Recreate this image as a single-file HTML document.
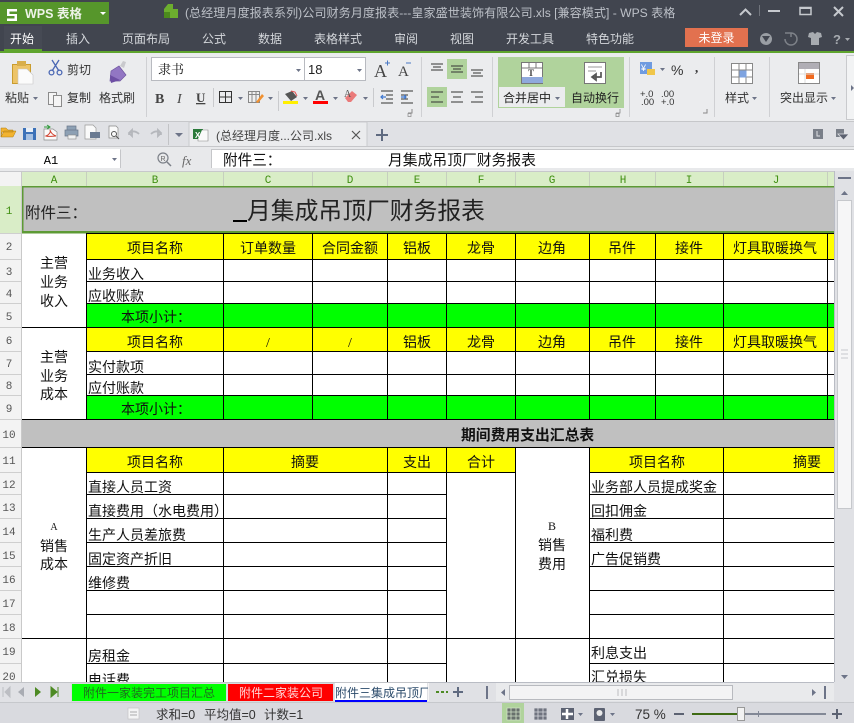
<!DOCTYPE html>
<html><head><meta charset="utf-8">
<style>
html,body{margin:0;padding:0;background:#ebecee;overflow:hidden}
svg{display:block}
text{white-space:pre}
.u{font-family:"Liberation Sans","Noto Sans CJK SC",sans-serif;font-size:12px;fill:#333}
.c{font-family:"Liberation Serif","WenQuanYi Zen Hei","Noto Sans CJK SC",sans-serif;font-size:14px;fill:#111}
.m{text-anchor:middle}
.tab{font-family:"Liberation Sans","Noto Sans CJK SC",sans-serif;font-size:12px;fill:#d4d7db}
.ch{font-family:"Liberation Mono",monospace;font-size:11px;fill:#3f8f10;text-anchor:middle}
.rh{font-family:"Liberation Mono",monospace;font-size:11px;fill:#555;text-anchor:middle}
.ar{fill:#6d7488}
</style></head><body>
<svg width="854" height="723" viewBox="0 0 854 723" xmlns="http://www.w3.org/2000/svg">
<defs><clipPath id="g"><rect x="0" y="171" width="834" height="511"/></clipPath></defs>

<!-- title bar -->
<rect width="854" height="51" fill="#41454f"/>
<rect y="51" width="854" height="2" fill="#5fa52e"/>
<rect x="0" y="2" width="109" height="22" fill="#56962b"/>
<path d="M7 9h10v2.500h-7.500v2.500h7.500v7h-10v-2.500h7.500v-2.500h-7.500z" fill="#fff"/>
<text x="25" y="18" style="font:bold 12.500px 'Liberation Sans','Noto Sans CJK SC',sans-serif;fill:#eef3e8">WPS 表格</text>
<path d="M100 12h6l-3 3z" fill="#fff"/>
<path d="M164 9l4-5h5v5h5v9h-5v0h-9z" fill="#6cae2e"/><rect x="164" y="12" width="6" height="6" fill="#4c8a1c"/>
<text x="185" y="17" style="font:12.130px 'Liberation Sans','Noto Sans CJK SC',sans-serif;fill:#bcc0c7">(总经理月度报表系列)公司财务月度报表---皇家盛世装饰有限公司.xls [兼容模式] - WPS 表格</text>
<path d="M740 15l5.500-5.500 5.500 5.500" fill="none" stroke="#c6c9ce" stroke-width="2"/>
<rect x="759" y="5" width="1" height="11" fill="#70747c"/>
<rect x="768" y="10" width="12" height="2" fill="#c6c9ce"/>
<rect x="800" y="7.500" width="11" height="7" fill="none" stroke="#c6c9ce" stroke-width="1.500"/><rect x="800" y="7" width="11" height="2" fill="#c6c9ce"/>
<path d="M834 7l9 9M843 7l-9 9" stroke="#c6c9ce" stroke-width="2"/>

<!-- tabs -->
<rect x="4" y="26" width="38" height="25" fill="#464a54"/>
<rect x="4" y="49" width="38" height="2" fill="#5fa52e"/>
<text class="tab" x="10" y="43" style="fill:#fff">开始</text>
<text class="tab" x="66" y="43">插入</text>
<text class="tab" x="122" y="43">页面布局</text>
<text class="tab" x="202" y="43">公式</text>
<text class="tab" x="258" y="43">数据</text>
<text class="tab" x="314" y="43">表格样式</text>
<text class="tab" x="394" y="43">审阅</text>
<text class="tab" x="450" y="43">视图</text>
<text class="tab" x="506" y="43">开发工具</text>
<text class="tab" x="586" y="43">特色功能</text>
<rect x="685" y="28" width="63" height="19" fill="#e2714f"/>
<text class="tab m" x="716.500" y="42" style="fill:#fff">未登录</text>
<circle cx="766" cy="39" r="6" fill="#9a9ea4"/><path d="M762 36h8l-4 6z" fill="#41454f"/>
<path d="M791 33a6 6 0 1 1-6 6M785 33h6v4" fill="none" stroke="#7d8188" stroke-width="1.500"/>
<path d="M809 33l4-1 2 2 2-2 4 1 1 4-3 1v7h-8v-7l-3-1z" fill="#a7abb0"/>
<text x="833" y="44" style="font:bold 13px 'Liberation Sans',sans-serif;fill:#a7abb0">?</text>
<path d="M845 38h5l-2.500 3z" fill="#a7abb0"/>

<!-- ribbon -->
<rect y="53" width="854" height="68" fill="#ebecee"/>
<rect y="121" width="854" height="1" fill="#c6c7ca"/>
<!-- clipboard -->
<rect x="12.500" y="64.500" width="18" height="19" fill="#edc468" stroke="#c99c2e"/>
<rect x="17" y="61" width="9" height="5" fill="#d8ae4c"/>
<path d="M18 69h9l6 6v9h-15z" fill="#fbfbfb" stroke="#c5c5c5" stroke-width=".6"/>
<text class="u" x="5" y="102">粘贴</text><path d="M33 97h5l-2.500 3z" class="ar"/>
<g fill="none" stroke="#4a67b4" stroke-width="1.300"><path d="M52 60l7 11M59 60l-7 11"/><circle cx="51.500" cy="72.500" r="2.400"/><circle cx="59.500" cy="72.500" r="2.400"/></g>
<text class="u" x="67" y="74">剪切</text>
<rect x="48.500" y="92.500" width="8" height="12" fill="#f5f5f5" stroke="#8b8b8b"/><rect x="53.500" y="95.500" width="8" height="11" fill="#f5f5f5" stroke="#8b8b8b"/>
<text class="u" x="67" y="102">复制</text>
<path d="M111 71l8-5 7 9-6 6-10 0z" fill="#9276c3" stroke="#6e549f" stroke-width=".7"/><path d="M120 66l3-5 3 1-2 6z" fill="#c9c9cd"/><path d="M110 75l10 5-9 3z" fill="#6e4fa4"/>
<text class="u" x="99" y="102">格式刷</text>
<rect x="146" y="57" width="1" height="60" fill="#cfd0d3"/>
<!-- font -->
<rect x="151.500" y="57.500" width="214" height="23" fill="#fff" stroke="#b8bac0"/>
<rect x="304" y="58" width="1" height="22" fill="#b8bac0"/>
<text x="158" y="74" style="font:13px 'Noto Serif CJK SC',serif;fill:#222">隶书</text>
<path d="M296 69h5l-2.500 3zM357 69h5l-2.500 3z" class="ar"/>
<text x="308" y="74" style="font:13px 'Liberation Sans',sans-serif;fill:#222">18</text>
<text x="374" y="77" style="font:18px 'Liberation Serif',serif;fill:#444">A</text><path d="M385 63h5M387.500 60.500v5" stroke="#4a78c4"/>
<text x="398" y="76" style="font:15px 'Liberation Serif',serif;fill:#444">A</text><path d="M406 63h5" stroke="#4a78c4"/>
<text x="155" y="103" style="font:bold 14px 'Liberation Serif',serif;fill:#444">B</text>
<text x="177" y="103" style="font:italic 14px 'Liberation Serif',serif;fill:#444">I</text>
<text x="196" y="102" style="font:bold 13px 'Liberation Serif',serif;fill:#444;text-decoration:underline">U</text>
<rect x="213" y="88" width="1" height="19" fill="#c9cacd"/>
<path d="M219.500 91.500h12v11h-12zM225.500 91.500v11M219.500 97h12" fill="none" stroke="#333"/>
<path d="M238 97h5l-2.500 3zM268 97h5l-2.500 3zM303 97h5l-2.500 3zM333 97h5l-2.500 3zM363 97h5l-2.500 3z" class="ar"/>
<rect x="248.500" y="91.500" width="11" height="11" fill="#f0f0f0" stroke="#888"/><path d="M248 94.500h12M252 92v11M256 92v11" stroke="#888"/><path d="M256 102l6-8 2 2-6 7z" fill="#f09030"/>
<rect x="278" y="91" width="1" height="20" fill="#c9cacd"/>
<path d="M285 94l7-3 5 6-6 4z" fill="#555"/><path d="M291 91l4 1 2 4" fill="none" stroke="#e05050"/>
<rect x="283" y="101" width="15" height="3" fill="#ffef00"/>
<text x="315" y="100" style="font:bold 14px 'Liberation Sans',sans-serif;fill:#555">A</text>
<rect x="313" y="101" width="15" height="3" fill="#f00"/>
<path d="M345 98l7-7 5 4-6 7h-3z" fill="#ea7a7a"/><text x="344" y="97" style="font:10px 'Liberation Serif',serif;fill:#555">A</text>
<rect x="373" y="88" width="1" height="19" fill="#c9cacd"/>
<path d="M381 91h12M386 95h7M386 99h7M381 103h12" stroke="#333"/><path d="M381 97h5M383 95l-2 2 2 2" fill="none" stroke="#3f78d0" stroke-width="1.200"/>
<path d="M401 91h12M401 95h7M401 99h7M401 103h12" stroke="#333"/><path d="M401 97h5M404 95l2 2-2 2" fill="none" stroke="#3f78d0" stroke-width="1.200"/>
<path d="M408 113h4v-4" fill="none" stroke="#888"/><rect x="408" y="113.500" width="3" height="3" fill="none" stroke="#888" stroke-width=".7"/>
<rect x="421" y="57" width="1" height="60" fill="#cfd0d3"/>
<!-- align -->
<rect x="447" y="59" width="20" height="20" fill="#b0d39c"/>
<rect x="427" y="87" width="20" height="20" fill="#b0d39c"/>
<g stroke="#333">
<path d="M431 64h12M433 67h8M431 70h12"/><path d="M451 66h12M453 69h8M451 72h12"/><path d="M471 70h12M473 73h8M471 76h12"/>
<path d="M431 92h12M431 97h8M431 102h12"/><path d="M451 92h12M453 97h8M451 102h12"/><path d="M471 92h12M475 97h8M471 102h12"/>
</g>
<rect x="492" y="57" width="1" height="60" fill="#cfd0d3"/>
<rect x="498" y="57" width="126" height="51" fill="#b0d39c"/>
<rect x="499" y="87" width="66" height="20" fill="#ebecee"/>
<rect x="521.500" y="62.500" width="21" height="21" fill="#fff" stroke="#777"/>
<path d="M522 68h21M529 63v5M536 63v5" stroke="#777"/><rect x="522" y="77" width="21" height="6" fill="#8fa9dc"/>
<text x="528" y="76" style="font:bold 9px 'Liberation Serif',serif;fill:#444">T</text>
<text class="u" x="503" y="102" style="fill:#222">合并居中</text><path d="M555 97h5l-2.500 3z" class="ar"/>
<rect x="584.500" y="62.500" width="21" height="21" fill="#fff" stroke="#777"/>
<path d="M588 67h14M588 71h8" stroke="#999"/><path d="M601 72v5h-8M596 74l-4 3 4 3z" fill="none" stroke="#555" stroke-width="1.700"/>
<text class="u" x="571" y="102" style="fill:#222">自动换行</text>
<path d="M618 113h4v-4M618 113.500h3v3h-3z" transform="translate(-2,0)" fill="none" stroke="#888" stroke-width=".8"/>
<rect x="629" y="57" width="1" height="60" fill="#cfd0d3"/>
<!-- number -->
<rect x="640" y="62" width="12" height="12" fill="#6f9be0"/><rect x="647" y="69" width="8" height="6" fill="#f0c64a"/><text x="641" y="71" style="font:9px 'Liberation Sans',sans-serif;fill:#fff">¥</text>
<path d="M660 68h5l-2.500 3z" class="ar"/>
<text x="671" y="75" style="font:14px 'Liberation Sans',sans-serif;fill:#333">%</text>
<text x="695" y="72" style="font:bold 13px 'Liberation Serif',serif;fill:#333">,</text>
<text x="640" y="97" style="font:9.500px 'Liberation Sans',sans-serif;fill:#333">+.0</text><text x="641" y="105" style="font:9.500px 'Liberation Sans',sans-serif;fill:#333">.00</text>
<text x="661" y="97" style="font:9.500px 'Liberation Sans',sans-serif;fill:#333">.00</text><text x="661" y="105" style="font:9.500px 'Liberation Sans',sans-serif;fill:#333">+.0</text>
<path d="M703 113h4v-4" fill="none" stroke="#888"/>
<rect x="714" y="57" width="1" height="60" fill="#cfd0d3"/>
<!-- styles -->
<rect x="731.500" y="63.500" width="21" height="20" fill="#fff" stroke="#888"/>
<path d="M732 70h21M732 77h21M739 63v21M746 63v21" stroke="#888"/><rect x="739.500" y="70.500" width="7" height="7" fill="#7ea3e0"/>
<text class="u" x="725" y="102">样式</text><path d="M752 97h5l-2.500 3z" class="ar"/>
<rect x="769" y="57" width="1" height="60" fill="#cfd0d3"/>
<rect x="798.500" y="62.500" width="21" height="21" fill="#fff" stroke="#888"/><rect x="799" y="63" width="20" height="6" fill="#b0aeb5"/><rect x="806" y="73" width="8" height="6" fill="#f06a20"/>
<path d="M799 74h20M805 69v14" stroke="#ddd"/>
<text class="u" x="780" y="102">突出显示</text><path d="M831 97h5l-2.500 3z" class="ar"/>
<rect x="846.500" y="55.500" width="8" height="64" fill="#f2f3f4" stroke="#c9cacd"/><path d="M851 85l3 3-3 3z" class="ar"/>

<!-- quick access + doc tabs -->
<rect y="122" width="854" height="24" fill="#e0e1e5"/>
<rect y="146" width="854" height="1" fill="#c6c7ca"/>
<path d="M1 137v-9h5l2 2h5v2h-11zM1 137l3-6h12l-3 6z" fill="#f2b330" stroke="#b07d10" stroke-width=".5"/>
<rect x="23" y="128" width="13" height="12" fill="#3c71b8"/><rect x="26" y="128" width="7" height="4" fill="#e8eef6"/><rect x="26" y="134" width="7" height="6" fill="#a6c0e2"/>
<path d="M44 129h9l4 3v8h-13z" fill="#fafafa" stroke="#888" stroke-width=".7"/><path d="M46 136c3-1 5-4 4-6 1 3 3 5 6 6-3 0-7 1-10 0z" fill="none" stroke="#d0402e"/><path d="M44 127h5M47 125l3 2-3 2" stroke="#2f9a3a" fill="none"/>
<path d="M67 130v-4h9v4M65 130h13v6h-13z" fill="#8da0b4" stroke="#69778a" stroke-width=".7"/><rect x="68" y="135" width="8" height="4" fill="#f1f2f3" stroke="#888" stroke-width=".6"/>
<path d="M85 125h8l3 3v11h-11z" fill="#fafafa" stroke="#999" stroke-width=".7"/><rect x="90" y="132" width="10" height="6" fill="#6a7a92"/>
<path d="M109 126h7l2 2v10h-9z" fill="#fafafa" stroke="#888" stroke-width=".7"/><circle cx="114" cy="134" r="2.500" fill="none" stroke="#555"/><path d="M116 136l3 3" stroke="#555"/>
<path d="M129 135c0-4 6-5 10-1M129 133l3-3v6z" fill="none" stroke="#b5b7bc" stroke-width="1.800"/>
<path d="M161 135c0-4-6-5-10-1M161 133l-3-3v6z" fill="none" stroke="#b5b7bc" stroke-width="1.800"/>
<rect x="168" y="124" width="1" height="21" fill="#c2c3c6"/>
<path d="M175 133h8l-4 4z" class="ar"/>
<path d="M189 146v-24h178v24z" fill="#ebecee"/><path d="M189 146v-24h178v24" fill="none" stroke="#c9cacd"/>
<rect x="193" y="129" width="10" height="10" fill="#2a7a3a"/><path d="M202 130h6v11h-10v-2" fill="#fafafa" stroke="#888" stroke-width=".6"/>
<text x="195" y="138" style="font:bold 8px 'Liberation Sans',sans-serif;fill:#fff">X</text>
<text x="216" y="140" style="font:12px 'Liberation Sans','Noto Sans CJK SC',sans-serif;fill:#444">(总经理月度...公司.xls</text>
<path d="M352 131l8 8M360 131l-8 8" stroke="#555" stroke-width="1.200"/>
<path d="M376 135h12M382 129v12" stroke="#5f6a80" stroke-width="2"/>
<rect x="813" y="129" width="10" height="10" fill="#7a7f89"/><path d="M817 131v5h3" fill="none" stroke="#e0e1e5"/>
<rect x="836" y="129" width="8" height="8" fill="#7a7f89"/><path d="M838 134h11l-5.500 6z" fill="#5c6170" stroke="#e0e1e5" stroke-width=".8"/>

<!-- formula bar -->
<rect y="147" width="854" height="24" fill="#e8e9eb"/>
<rect x="0" y="149" width="120" height="19" fill="#fff"/><path d="M0 168.500h120.500v-19" fill="none" stroke="#c5c6c9"/>
<text x="51" y="164" class="m" style="font:12px 'Liberation Mono',monospace;fill:#000" text-anchor="middle">A1</text>
<path d="M112 158h5l-2.500 3z" class="ar"/>
<circle cx="163" cy="158" r="5" fill="none" stroke="#7c8088" stroke-width="1.200"/><path d="M167 162l4 4" stroke="#7c8088" stroke-width="1.500"/><text x="160.500" y="161" style="font:7px 'Liberation Sans',sans-serif;fill:#666">R</text>
<text x="182" y="165" style="font:italic 13px 'Liberation Serif',serif;fill:#666">fx</text>
<rect x="211.500" y="149.500" width="643" height="19" fill="#fff" stroke="#c5c6c9"/>
<text x="223" y="165" style="font:14.600px 'Liberation Sans','WenQuanYi Zen Hei','Noto Sans CJK SC',sans-serif;fill:#111">附件三：</text>
<text x="388" y="165" style="font:14.800px 'Liberation Sans','WenQuanYi Zen Hei','Noto Sans CJK SC',sans-serif;fill:#111">月集成吊顶厂财务报表</text>
<rect y="168" width="854" height="3" fill="#e8e9eb"/>

<!-- sheet -->
<g clip-path="url(#g)">
<rect x="0" y="171" width="834" height="511" fill="#fff"/>
<!-- column headers -->
<rect x="22" y="172" width="812" height="14" fill="#d9edc7"/>
<rect x="0" y="172" width="22" height="14" fill="#f3f3f3"/>
<g fill="#c6cfbe"><rect x="86" y="172" width="1" height="14"/><rect x="223" y="172" width="1" height="14"/><rect x="312" y="172" width="1" height="14"/><rect x="387" y="172" width="1" height="14"/><rect x="446" y="172" width="1" height="14"/><rect x="515" y="172" width="1" height="14"/><rect x="589" y="172" width="1" height="14"/><rect x="655" y="172" width="1" height="14"/><rect x="723" y="172" width="1" height="14"/><rect x="827" y="172" width="1" height="14"/></g>
<text class="ch" x="54" y="183">A</text><text class="ch" x="155" y="183">B</text><text class="ch" x="268" y="183">C</text><text class="ch" x="350" y="183">D</text><text class="ch" x="417" y="183">E</text><text class="ch" x="481" y="183">F</text><text class="ch" x="552" y="183">G</text><text class="ch" x="623" y="183">H</text><text class="ch" x="689" y="183">I</text><text class="ch" x="776" y="183">J</text>
<rect x="0" y="171" width="854" height="1" fill="#c7c8cb"/>
<!-- row headers -->
<rect x="0" y="186" width="21" height="496" fill="#f3f3f3"/>
<rect x="0" y="186" width="21" height="47" fill="#d9edc7"/>
<rect x="21" y="172" width="1" height="510" fill="#c9c9c9"/>
<g fill="#cfcfcf"><rect y="233" width="21" height="1"/><rect y="259" width="21" height="1"/><rect y="281" width="21" height="1"/><rect y="303" width="21" height="1"/><rect y="327" width="21" height="1"/><rect y="351" width="21" height="1"/><rect y="374" width="21" height="1"/><rect y="395" width="21" height="1"/><rect y="419" width="21" height="1"/><rect y="447" width="21" height="1"/><rect y="472" width="21" height="1"/><rect y="494" width="21" height="1"/><rect y="518" width="21" height="1"/><rect y="542" width="21" height="1"/><rect y="566" width="21" height="1"/><rect y="590" width="21" height="1"/><rect y="614" width="21" height="1"/><rect y="638" width="21" height="1"/><rect y="663" width="21" height="1"/></g>
<text class="rh" x="9" y="214" style="fill:#3f8f10">1</text>
<text class="rh" x="9" y="250">2</text><text class="rh" x="9" y="275">3</text><text class="rh" x="9" y="297">4</text><text class="rh" x="9" y="320">5</text><text class="rh" x="9" y="344">6</text><text class="rh" x="9" y="367">7</text><text class="rh" x="9" y="389">8</text><text class="rh" x="9" y="412">9</text><text class="rh" x="9" y="438">10</text><text class="rh" x="9" y="464">11</text><text class="rh" x="9" y="488">12</text><text class="rh" x="9" y="511">13</text><text class="rh" x="9" y="535">14</text><text class="rh" x="9" y="559">15</text><text class="rh" x="9" y="583">16</text><text class="rh" x="9" y="607">17</text><text class="rh" x="9" y="631">18</text><text class="rh" x="9" y="655">19</text><text class="rh" x="9" y="680">20</text>

<!-- fills -->
<rect x="22" y="186" width="812" height="47" fill="#c0c0c0"/>
<rect x="22" y="186" width="812" height="1.500" fill="#5d9a35"/>
<rect x="22" y="186" width="1.500" height="47" fill="#5d9a35"/>
<rect x="22" y="231" width="812" height="2.500" fill="#5d9a35"/>
<rect x="86" y="234" width="748" height="25" fill="#ff0"/>
<rect x="86" y="304" width="748" height="23" fill="#0f0"/>
<rect x="86" y="328" width="748" height="23" fill="#ff0"/>
<rect x="86" y="396" width="748" height="23" fill="#0f0"/>
<rect x="22" y="420" width="812" height="27" fill="#c0c0c0"/>
<rect x="86" y="448" width="429" height="24" fill="#ff0"/>
<rect x="589" y="448" width="245" height="24" fill="#ff0"/>

<!-- grid -->
<g fill="#000" shape-rendering="crispEdges">
<rect x="86" y="233" width="748" height="1"/>
<rect x="86" y="259" width="748" height="1"/>
<rect x="86" y="281" width="748" height="1"/>
<rect x="86" y="303" width="748" height="1"/>
<rect x="22" y="327" width="812" height="1"/>
<rect x="86" y="351" width="748" height="1"/>
<rect x="86" y="374" width="748" height="1"/>
<rect x="86" y="395" width="748" height="1"/>
<rect x="22" y="419" width="812" height="1"/>
<rect x="22" y="447" width="812" height="1"/>
<rect x="86" y="472" width="429" height="1"/><rect x="589" y="472" width="245" height="1"/>
<rect x="86" y="494" width="360" height="1"/><rect x="589" y="494" width="245" height="1"/>
<rect x="86" y="518" width="360" height="1"/><rect x="589" y="518" width="245" height="1"/>
<rect x="86" y="542" width="360" height="1"/><rect x="589" y="542" width="245" height="1"/>
<rect x="86" y="566" width="360" height="1"/><rect x="589" y="566" width="245" height="1"/>
<rect x="86" y="590" width="360" height="1"/><rect x="589" y="590" width="245" height="1"/>
<rect x="86" y="614" width="360" height="1"/><rect x="589" y="614" width="245" height="1"/>
<rect x="22" y="638" width="812" height="1"/>
<rect x="86" y="663" width="360" height="1"/><rect x="589" y="663" width="245" height="1"/>
<!-- verticals top block -->
<rect x="86" y="233" width="1" height="187"/><rect x="223" y="233" width="1" height="187"/><rect x="312" y="233" width="1" height="187"/><rect x="387" y="233" width="1" height="187"/><rect x="446" y="233" width="1" height="187"/><rect x="515" y="233" width="1" height="187"/><rect x="589" y="233" width="1" height="187"/><rect x="655" y="233" width="1" height="187"/><rect x="723" y="233" width="1" height="187"/><rect x="827" y="233" width="1" height="187"/>
<!-- verticals bottom block -->
<rect x="86" y="447" width="1" height="235"/><rect x="223" y="447" width="1" height="235"/><rect x="387" y="447" width="1" height="235"/><rect x="446" y="447" width="1" height="235"/><rect x="515" y="447" width="1" height="235"/><rect x="589" y="447" width="1" height="235"/><rect x="723" y="447" width="1" height="235"/>
</g>

<!-- title text -->
<text x="25" y="218" style="font:15.500px 'WenQuanYi Zen Hei','Noto Sans CJK SC',sans-serif;fill:#222">附件三：</text>
<rect x="233" y="220" width="14" height="2" fill="#000"/>
<text x="247" y="219" style="font:23.800px 'WenQuanYi Zen Hei','Noto Sans CJK SC',sans-serif;fill:#222">月集成吊顶厂财务报表</text>
<text x="461" y="440" style="font:bold 14.800px 'Noto Sans CJK SC',sans-serif;fill:#111">期间费用支出汇总表</text>

<!-- row labels -->
<text class="c m" x="54" y="268">主营</text><text class="c m" x="54" y="287">业务</text><text class="c m" x="54" y="306">收入</text>
<text class="c m" x="54" y="362">主营</text><text class="c m" x="54" y="381">业务</text><text class="c m" x="54" y="399">成本</text>
<text class="c m" x="54" y="530" style="font-size:10px">A</text><text class="c m" x="54" y="551">销售</text><text class="c m" x="54" y="569">成本</text>
<text class="c m" x="552" y="530" style="font-size:12px">B</text><text class="c m" x="552" y="550">销售</text><text class="c m" x="552" y="569">费用</text>

<!-- yellow header row 2 -->
<text class="c m" x="155" y="253">项目名称</text><text class="c m" x="268" y="253">订单数量</text><text class="c m" x="350" y="253">合同金额</text><text class="c m" x="417" y="253">铝板</text><text class="c m" x="481" y="253">龙骨</text><text class="c m" x="552" y="253">边角</text><text class="c m" x="622" y="253">吊件</text><text class="c m" x="689" y="253">接件</text><text class="c m" x="775" y="253">灯具取暖换气</text>
<text class="c" x="88" y="279">业务收入</text><text class="c" x="88" y="301">应收账款</text><text class="c" x="121" y="322">本项小计：</text>
<!-- yellow header row 6 -->
<text class="c m" x="155" y="347">项目名称</text><text class="c m" x="268" y="347">/</text><text class="c m" x="350" y="347">/</text><text class="c m" x="417" y="347">铝板</text><text class="c m" x="481" y="347">龙骨</text><text class="c m" x="552" y="347">边角</text><text class="c m" x="622" y="347">吊件</text><text class="c m" x="689" y="347">接件</text><text class="c m" x="775" y="347">灯具取暖换气</text>
<text class="c" x="88" y="372">实付款项</text><text class="c" x="88" y="393">应付账款</text><text class="c" x="121" y="414">本项小计：</text>
<!-- row 11 -->
<text class="c m" x="155" y="467">项目名称</text><text class="c m" x="305" y="467">摘要</text><text class="c m" x="417" y="467">支出</text><text class="c m" x="481" y="467">合计</text><text class="c m" x="657" y="467">项目名称</text><text class="c m" x="807" y="467">摘要</text>
<text class="c" x="88" y="492">直接人员工资</text><text class="c" x="88" y="516">直接费用（水电费用）</text><text class="c" x="88" y="540">生产人员差旅费</text><text class="c" x="88" y="564">固定资产折旧</text><text class="c" x="88" y="588">维修费</text><text class="c" x="88" y="661">房租金</text><text class="c" x="88" y="685">电话费</text>
<text class="c" x="591" y="492">业务部人员提成奖金</text><text class="c" x="591" y="516">回扣佣金</text><text class="c" x="591" y="540">福利费</text><text class="c" x="591" y="564">广告促销费</text><text class="c" x="591" y="658">利息支出</text><text class="c" x="591" y="682">汇兑损失</text>
</g>

<!-- vertical scrollbar -->
<rect x="834" y="171" width="20" height="511" fill="#e0e1e5"/>
<rect x="834" y="171" width="1" height="511" fill="#b9bcc4"/>
<rect x="838" y="177" width="13" height="2" fill="#6d7488"/>
<path d="M841 195l3.500-4 3.500 4z" class="ar"/>
<rect x="837.500" y="200.500" width="14" height="308" fill="#f6f6f7" stroke="#c6c8cc"/>
<path d="M841 350h7M841 354h7M841 358h7" stroke="#c6c8cc"/>
<path d="M841 675h7l-3.500 4z" class="ar"/>

<!-- sheet tab bar -->
<rect y="682" width="854" height="20" fill="#e0e1e5"/>
<rect y="682" width="854" height="1" fill="#c2c4c8"/>
<path d="M3 687v10M10 687l-5 5 5 5z" fill="#bcbec3" stroke="#bcbec3"/>
<path d="M24 687v10l-6-5z" fill="#a9acb3"/>
<path d="M35 687v10l6-5z" fill="#4d8a24"/>
<path d="M51 687v10l6-5zM58 687v10" fill="#4d8a24" stroke="#4d8a24"/>
<rect x="71.500" y="683.500" width="155" height="18" fill="#0f0" stroke="#d8dadd"/>
<rect x="227.500" y="683.500" width="106" height="18" fill="#f00" stroke="#d8dadd"/>
<rect x="335" y="683" width="92" height="19" fill="#fff"/>
<rect x="335" y="700" width="92" height="2" fill="#00f"/>
<text x="83" y="697" style="font:12px 'Liberation Sans','Noto Sans CJK SC',sans-serif;fill:#1f6b1f">附件一家装完工项目汇总</text>
<text x="239" y="697" style="font:12px 'Liberation Sans','Noto Sans CJK SC',sans-serif;fill:#ffd7d7">附件二家装公司</text>
<text x="335" y="697" style="font:12px 'Liberation Sans','Noto Sans CJK SC',sans-serif;fill:#2a4a6a">附件三集成吊顶厂</text>
<rect x="428" y="682" width="426" height="20" fill="#e0e1e5"/>
<rect x="428" y="682" width="406" height="1" fill="#b9bcc4"/>
<rect x="428" y="683" width="1" height="18" fill="#f4f4f4"/>
<path d="M436 692h3M441 692h3M446 692h2" stroke="#4d8a24" stroke-width="2"/>
<path d="M453 692h10M458 687v10" stroke="#5f6a80" stroke-width="2"/>
<rect x="486" y="686" width="2" height="13" fill="#6d7488"/>
<rect x="496" y="683" width="338" height="18" fill="#e9eaec"/>
<path d="M505 689v7l-4-3.500z" class="ar"/>
<rect x="509.500" y="685.500" width="223" height="14" fill="#f3f3f4" stroke="#b8babf"/>
<path d="M618 689v7M622 689v7M626 689v7" stroke="#bcbdc1"/>
<path d="M812 689v7l4-3.500z" class="ar"/>
<rect x="824" y="686" width="2" height="13" fill="#6d7488"/>

<!-- status bar -->
<rect y="702" width="854" height="21" fill="#d9dadf"/>
<rect y="702" width="854" height="1" fill="#c6c8cc"/>
<rect x="128" y="708" width="11" height="11" fill="#f4f4f5" stroke="#c4c4c6" stroke-width=".7"/><path d="M130 712h7M130 715h7" stroke="#aaa"/>
<text x="156" y="719" style="font:12.500px 'Liberation Sans','Noto Sans CJK SC',sans-serif;fill:#333">求和=0</text>
<text x="204" y="719" style="font:12.500px 'Liberation Sans','Noto Sans CJK SC',sans-serif;fill:#333">平均值=0</text>
<text x="264" y="719" style="font:12.500px 'Liberation Sans','Noto Sans CJK SC',sans-serif;fill:#333">计数=1</text>
<rect x="502" y="703" width="22" height="20" fill="#b0d39c"/>
<path d="M507 708h13v12h-13zM507 712h13M507 716h13M511 708v12M516 708v12" fill="#68706c" stroke="#d0e0c6" stroke-width=".8"/>
<path d="M534 708h13v12h-13zM534 712h13M534 716h13M538 708v12M543 708v12" fill="#6f737f" stroke="#d9dadf" stroke-width=".8"/>
<rect x="561" y="708" width="13" height="12" fill="#5c6272"/><path d="M567 709v10M562 714h11" stroke="#fff" stroke-width="2.500"/>
<path d="M578 713h5l-2.500 3zM610 713h5l-2.500 3z" class="ar"/>
<rect x="594" y="708" width="11" height="13" rx="1" fill="#5c6272"/><circle cx="599.500" cy="713" r="3" fill="#e9e9e9"/>
<text x="635" y="719" style="font:13.500px 'Liberation Sans',sans-serif;fill:#333">75 %</text>
<rect x="674" y="713" width="10" height="2" fill="#5c6272"/>
<rect x="692" y="713" width="134" height="2" fill="#828896"/>
<rect x="692" y="713" width="46" height="2" fill="#3f6b14"/>
<rect x="758" y="711" width="1" height="6" fill="#828896"/>
<rect x="737.500" y="707.500" width="7" height="13" fill="#f2f2f2" stroke="#999"/>
<path d="M832 714h10M837 709v10" stroke="#5c6272" stroke-width="2"/>
</svg>
</body></html>
